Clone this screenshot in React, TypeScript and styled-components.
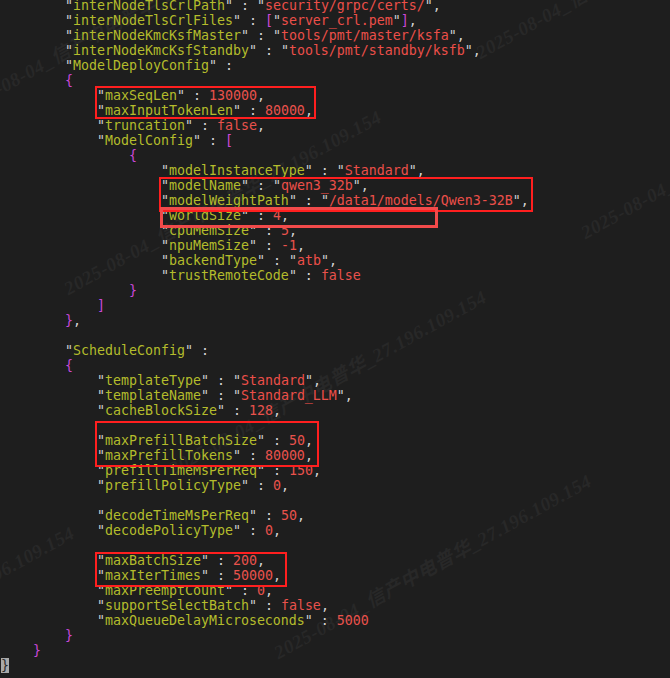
import React from "react";
import styled, { createGlobalStyle } from "styled-components";

const Global = createGlobalStyle`
  html, body { margin: 0; padding: 0; background: #1e1e1e; }
  #root { width: 670px; height: 678px; }
`;

const Terminal = styled.div`
  position: relative;
  width: 670px;
  height: 678px;
  overflow: hidden;
  background: #1e1e1e;
`;

const Code = styled.pre`
  position: relative;
  z-index: 1;
  margin: -2px 0 0 0;
  padding: 0 0 0 1px;
  font-family: "DejaVu Sans Mono", "Liberation Mono", monospace;
  font-size: 13.29px;
  line-height: 15px;
  color: #d2d2d2;
`;

const Line = styled.div`
  height: 15px;
  white-space: pre;
`;

const Quote = styled.span`
  color: #cfcfd4;
`;
const Key = styled.span`
  color: #b4bc2c;
`;
const Str = styled.span`
  color: #ec4f49;
`;
const Num = styled.span`
  color: #e9524c;
`;
const Brace = styled.span`
  color: #c948d8;
`;
const Punct = styled.span`
  color: #d4d4d4;
`;
const Cursor = styled.span`
  background: #a9a9a9;
  color: #2a2a2a;
`;

const Mark = styled.div<{ $tone: "strong" | "soft" }>`
  position: absolute;
  z-index: 2;
  box-sizing: border-box;
  border: ${(p) => (p.$tone === "strong" ? "2px solid #ff1f1f" : "3px solid #f24a4a")};
  pointer-events: none;
`;

const Watermark = styled.span`
  position: absolute;
  z-index: 0;
  font-family: "Liberation Serif", "Noto Sans CJK SC", serif;
  font-style: italic;
  font-weight: bold;
  font-size: 19px;
  letter-spacing: 0.6px;
  line-height: 19px;
  color: #282828;
  white-space: nowrap;
  transform-origin: 0 100%;
  transform: rotate(-29deg);
  pointer-events: none;
`;

const lines: string[] = [
  '        "interNodeTlsCrlPath" : "security/grpc/certs/",',
  '        "interNodeTlsCrlFiles" : ["server_crl.pem"],',
  '        "interNodeKmcKsfMaster" : "tools/pmt/master/ksfa",',
  '        "interNodeKmcKsfStandby" : "tools/pmt/standby/ksfb",',
  '        "ModelDeployConfig" :',
  "        {",
  '            "maxSeqLen" : 130000,',
  '            "maxInputTokenLen" : 80000,',
  '            "truncation" : false,',
  '            "ModelConfig" : [',
  "                {",
  '                    "modelInstanceType" : "Standard",',
  '                    "modelName" : "qwen3_32b",',
  '                    "modelWeightPath" : "/data1/models/Qwen3-32B",',
  '                    "worldSize" : 4,',
  '                    "cpuMemSize" : 5,',
  '                    "npuMemSize" : -1,',
  '                    "backendType" : "atb",',
  '                    "trustRemoteCode" : false',
  "                }",
  "            ]",
  "        },",
  "",
  '        "ScheduleConfig" :',
  "        {",
  '            "templateType" : "Standard",',
  '            "templateName" : "Standard_LLM",',
  '            "cacheBlockSize" : 128,',
  "",
  '            "maxPrefillBatchSize" : 50,',
  '            "maxPrefillTokens" : 80000,',
  '            "prefillTimeMsPerReq" : 150,',
  '            "prefillPolicyType" : 0,',
  "",
  '            "decodeTimeMsPerReq" : 50,',
  '            "decodePolicyType" : 0,',
  "",
  '            "maxBatchSize" : 200,',
  '            "maxIterTimes" : 50000,',
  '            "maxPreemptCount" : 0,',
  '            "supportSelectBatch" : false,',
  '            "maxQueueDelayMicroseconds" : 5000',
  "        }",
  "    }",
];

const tokenRe = /"([^"]*)"(\s*:)?|(-?\d+|false|true)|([{}[\]])|([\s:,]+)/g;

function renderLine(text: string) {
  const out: React.ReactNode[] = [];
  let m: RegExpExecArray | null;
  let i = 0;
  tokenRe.lastIndex = 0;
  while ((m = tokenRe.exec(text)) !== null) {
    if (m[1] !== undefined) {
      const Inner = m[2] ? Key : Str;
      out.push(
        <React.Fragment key={i++}>
          <Quote>"</Quote>
          <Inner>{m[1]}</Inner>
          <Quote>"</Quote>
          {m[2] ? <Punct>{m[2]}</Punct> : null}
        </React.Fragment>
      );
    } else if (m[3] !== undefined) {
      out.push(<Num key={i++}>{m[3]}</Num>);
    } else if (m[4] !== undefined) {
      out.push(<Brace key={i++}>{m[4]}</Brace>);
    } else if (m[5] !== undefined) {
      out.push(<Punct key={i++}>{m[5]}</Punct>);
    }
  }
  return out;
}

const marks = [
  { x: 95, y: 86, w: 221, h: 33, tone: "strong" as const },
  { x: 159, y: 177, w: 374, h: 35, tone: "strong" as const },
  { x: 160, y: 207, w: 278, h: 21, tone: "soft" as const },
  { x: 95, y: 421, w: 224, h: 46, tone: "strong" as const },
  { x: 95, y: 552, w: 192, h: 35, tone: "strong" as const },
];

const wmText = "2025-08-04_信产中电普华_27.196.109.154";
const wmStarts = [
  [-35, 118],
  [70, 298],
  [175, 478],
  [280, 662],
  [482, 62],
  [587, 242],
  [-237, 714],
];

export default function App() {
  return (
    <>
      <Global />
      <Terminal>
        {wmStarts.map(([x, y], idx) => (
          <Watermark key={`w${idx}`} style={{ left: x, top: y - 19 }}>
            {wmText}
          </Watermark>
        ))}
        <Code>
          {lines.map((l, idx) => (
            <Line key={idx}>{renderLine(l)}</Line>
          ))}
          <Line>
            <Cursor>{"}"}</Cursor>
          </Line>
        </Code>
        {marks.map((b, idx) => (
          <Mark
            key={`m${idx}`}
            $tone={b.tone}
            style={{ left: b.x, top: b.y, width: b.w, height: b.h }}
          />
        ))}
      </Terminal>
    </>
  );
}
